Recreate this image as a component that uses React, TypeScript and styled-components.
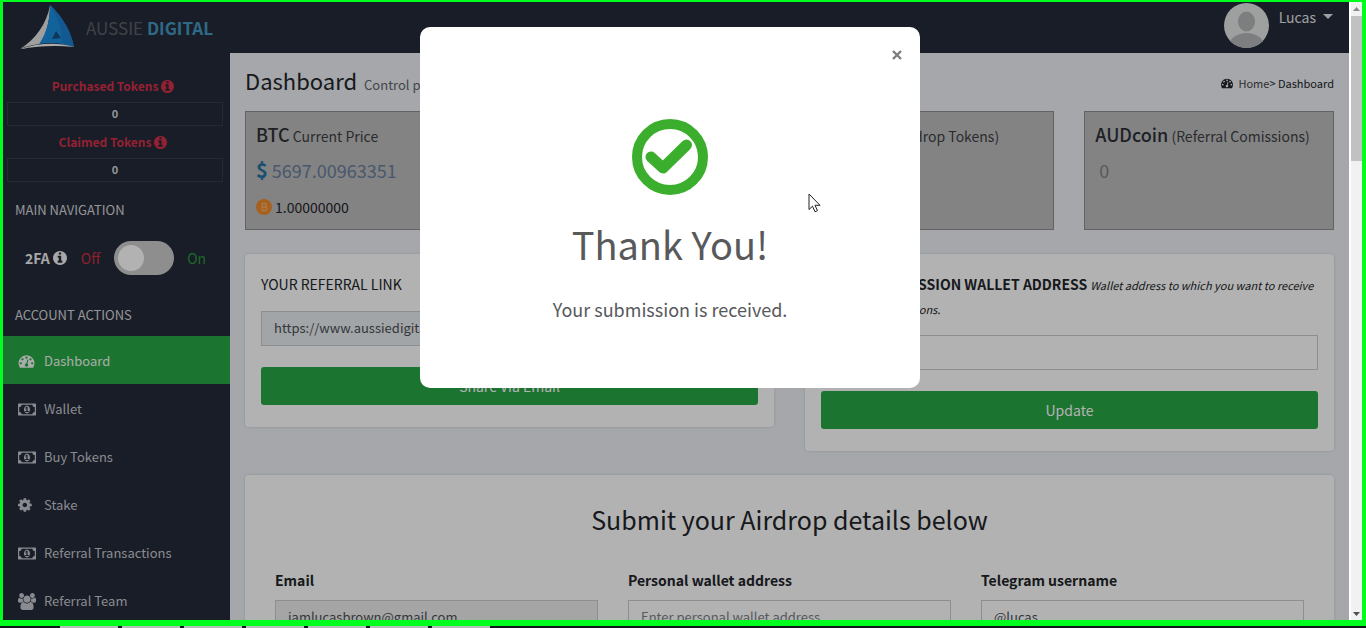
import React from "react";
import styled, { createGlobalStyle } from "styled-components";

const GlobalStyle = createGlobalStyle`
  *, *::before, *::after { box-sizing: border-box; }
  body {
    margin: 0;
    font-family: "Noto Sans CJK SC", "Noto Sans", sans-serif;
    font-size: 14px;
    line-height: 24px;
    color: #212529;
  }
  input, button { font: inherit; color: inherit; }
  h1, h2, h3, p { margin: 0; font-weight: 400; }
`;

/* ---------- icons ---------- */

const glyphs = {
  gauge: {
    box: "0 0 1792 1792",
    d: "M384 1152q0-53-37.5-90.5t-90.5-37.5-90.5 37.5-37.5 90.5 37.5 90.5 90.5 37.5 90.5-37.5 37.5-90.5zm192-448q0-53-37.5-90.5t-90.5-37.5-90.5 37.5-37.5 90.5 37.5 90.5 90.5 37.5 90.5-37.5 37.5-90.5zm428 481l101-382q6-26-7.5-48.5t-38.5-29.5-48 6.5-30 39.5l-101 382q-60 5-107 43.5t-63 98.5q-20 77 20 146t117 89 146-20 89-117q16-60-6-117t-72-91zm660-33q0-53-37.5-90.5t-90.5-37.5-90.5 37.5-37.5 90.5 37.5 90.5 90.5 37.5 90.5-37.5 37.5-90.5zm-640-640q0-53-37.5-90.5t-90.5-37.5-90.5 37.5-37.5 90.5 37.5 90.5 90.5 37.5 90.5-37.5 37.5-90.5zm448 192q0-53-37.5-90.5t-90.5-37.5-90.5 37.5-37.5 90.5 37.5 90.5 90.5 37.5 90.5-37.5 37.5-90.5zm320 448q0 261-141 483-19 29-54 29h-1402q-35 0-54-29-141-221-141-483 0-182 71-348t191-286 286-191 348-71 348 71 286 191 191 286 71 348z",
  },
  money: {
    box: "0 0 1920 1792",
    d: "M768 1152h384v-96h-128v-448h-114l-148 137 77 80q42-37 55-57h2v288h-128v96zm512-256q0 70-21 142t-59.5 134-101.5 101-138 39-138-39-101.5-101-59.5-134-21-142 21-142 59.5-134 101.5-101 138-39 138 39 101.5 101 59.5 134 21 142zm512 256v-512q-106 0-181-75t-75-181h-1152q0 106-75 181t-181 75v512q106 0 181 75t75 181h1152q0-106 75-181t181-75zm128-832v1152q0 26-19 45t-45 19h-1792q-26 0-45-19t-19-45v-1152q0-26 19-45t45-19h1792q26 0 45 19t19 45z",
  },
  cog: {
    box: "128 0 1792 1792",
    d: "M1152 896q0-106-75-181t-181-75-181 75-75 181 75 181 181 75 181-75 75-181zm512-109v222q0 12-8 23t-20 13l-185 28q-19 54-39 91 35 50 107 138 10 12 10 25t-9 23q-27 37-99 108t-94 71q-12 0-26-9l-138-108q-44 23-91 38-16 136-29 186-7 28-36 28h-222q-14 0-24.5-8.5t-11.5-21.5l-28-184q-49-16-90-37l-141 107q-10 9-25 9-14 0-25-11-126-114-165-168-7-10-7-23 0-12 8-23 15-21 51-66.5t54-70.5q-27-50-41-99l-183-27q-13-2-21-12.5t-8-23.5v-222q0-12 8-23t19-13l186-28q14-46 39-92-40-57-107-138-10-12-10-24 0-10 9-23 26-36 98.5-107.5t94.5-71.5q13 0 26 10l138 107q44-23 91-38 16-136 29-186 7-28 36-28h222q14 0 24.5 8.5t11.5 21.5l28 184q49 16 90 37l142-107q9-9 24-9 13 0 25 10 129 119 165 170 7 8 7 22 0 12-8 23-15 21-51 66.5t-54 70.5q26 50 41 98l183 28q13 2 21 12.5t8 23.5z",
  },
  users: {
    box: "64 0 1920 1792",
    d: "M657 896q-162 5-265 128h-134q-82 0-138-40.5t-56-118.5q0-353 124-353 6 0 43.5 21t97.5 42.5 119 21.5q67 0 133-23-5 37-5 66 0 159 93 286zm1071 637q0 120-73 189.5t-194 69.5h-874q-121 0-194-69.5t-73-189.5q0-53 3.5-103.5t14-109 26.5-108.5 43-97.5 62-81 85.5-53.5 111.5-20q10 0 43 21.5t73 48 107 48 135 21.5 135-21.5 107-48 73-48 43-21.5q61 0 111.5 20t85.5 53.5 62 81 43 97.5 26.5 108.5 14 109 3.5 103.5zm-1024-1277q0 106-75 181t-181 75-181-75-75-181 75-181 181-75 181 75 75 181zm704 384q0 159-112.5 271.5t-271.5 112.5-271.5-112.5-112.5-271.5 112.5-271.5 271.5-112.5 271.5 112.5 112.5 271.5zm576 225q0 78-56 118.5t-138 40.5h-134q-103-123-265-128 93-127 93-286 0-29-5-66 66 23 133 23 59 0 119-21.5t97.5-42.5 43.5-21q124 0 124 353zm-128-609q0 106-75 181t-181 75-181-75-75-181 75-181 181-75 181 75 75 181z",
  },
  info: {
    box: "128 128 1536 1536",
    d: "M1152 1376v-160q0-14-9-23t-23-9h-96v-512q0-14-9-23t-23-9h-320q-14 0-23 9t-9 23v160q0 14 9 23t23 9h96v320h-96q-14 0-23 9t-9 23v160q0 14 9 23t23 9h448q14 0 23-9t9-23zm-128-896v-160q0-14-9-23t-23-9h-192q-14 0-23 9t-9 23v160q0 14 9 23t23 9h192q14 0 23-9t9-23zm640 416q0 209-103 385.5t-279.5 279.5-385.5 103-385.5-103-279.5-279.5-103-385.5 103-385.5 279.5-279.5 385.5-103 385.5 103 279.5 279.5 103 385.5z",
  },
};

type GlyphName = keyof typeof glyphs;

const Icon = ({ name, width, height }: { name: GlyphName; width: number; height: number }) => (
  <svg width={width} height={height} viewBox={glyphs[name].box} fill="currentColor" aria-hidden="true">
    <path d={glyphs[name].d} />
  </svg>
);

/* ---------- window frame ---------- */

const Screen = styled.div`
  display: flex;
  flex-direction: column;
  height: 100vh;
  overflow: hidden;
  background: #14161c;
`;

const Frame = styled.div`
  flex: 1;
  min-height: 0;
  display: grid;
  grid-template-columns: 1fr 13px;
  border: solid #00ff1e;
  border-width: 2px 4px 6px 3px;
`;

const Taskbar = styled.div`
  height: 2px;
  margin-left: 60px;
  width: 430px;
  background: repeating-linear-gradient(90deg, #b9bdb9 0 58px, #14161c 58px 62px);
`;

const View = styled.div`
  position: relative;
  overflow: hidden;
  display: flex;
  flex-direction: column;
  background: #ecf0f5;
`;

const Scrollbar = styled.div`
  display: flex;
  flex-direction: column;
  align-items: center;
  justify-content: space-between;
  background: #f1f1f1;
  border-left: 2px solid #ffffff;
`;

const Thumb = styled.div`
  align-self: stretch;
  height: 145px;
  margin-bottom: auto;
  background: #c1c1c1;
`;

const ScrollArrow = styled.svg`
  display: block;
  width: 11px;
  height: 14px;
`;

/* ---------- header ---------- */

const Header = styled.header`
  flex: none;
  height: 51px;
  display: flex;
  justify-content: space-between;
  padding: 0 16px 0 17px;
  background: #252a38;
`;

const Brand = styled.a`
  display: flex;
  align-items: center;
  gap: 11px;
  text-decoration: none;
  font-size: 17px;
  color: #5c5f68;
`;

const BrandAccent = styled.b`
  color: #4398c0;
`;

const UserMenu = styled.button`
  display: flex;
  align-items: flex-start;
  gap: 10px;
  padding: 1px 0 0;
  border: 0;
  background: none;
  color: #e4e5e8;
`;

const UserName = styled.span`
  display: flex;
  align-items: center;
  gap: 7px;
  padding-top: 2px;
`;

/* ---------- sidebar ---------- */

const Body = styled.div`
  display: grid;
  grid-template-columns: 227px 1fr;
  flex: 1;
  min-height: 0;
`;

const Sidebar = styled.aside`
  overflow: hidden;
  padding-top: 21px;
  background: #252a38;
  color: #d5d7dc;
`;

const TokenField = styled.div`
  padding: 0 7px 4px 4px;
`;

const TokenLabel = styled.label`
  display: flex;
  align-items: center;
  justify-content: center;
  gap: 3px;
  height: 28px;
  padding: 0 4px 4px 0;
  font-size: 12px;
  font-weight: 700;
  color: #d4304a;
`;

const TokenInput = styled.input`
  display: block;
  width: 100%;
  height: 24px;
  padding: 0 0 2px;
  border: 1px solid #363b4b;
  background: transparent;
  text-align: center;
  font-size: 11px;
  font-weight: 700;
`;

const SideHeading = styled.h3`
  padding: 12px 12px 9px;
  font-size: 13px;
  line-height: 24px;
`;

const TwoFactor = styled.label`
  display: flex;
  align-items: center;
  height: 53px;
  margin-bottom: 7px;
  padding-left: 22px;
`;

const TwoFactorName = styled.b`
  display: flex;
  align-items: center;
  gap: 3px;
  margin-right: 14px;
  color: #f0f0f2;
`;

const SwitchState = styled.span<{ $on?: boolean }>`
  color: ${(p) => (p.$on ? "#28963c" : "#cc2f45")};
`;

const Switch = styled.input`
  appearance: none;
  display: flex;
  align-items: center;
  width: 60px;
  height: 34px;
  margin: 0 13px 0 14px;
  padding: 0 4px;
  border-radius: 17px;
  background: #cccccc;
  &::before {
    content: "";
    width: 26px;
    height: 26px;
    border-radius: 50%;
    background: #ffffff;
  }
  &:checked { justify-content: flex-end; background: #28a745; }
`;

const NavItem = styled.a<{ $active?: boolean }>`
  display: grid;
  grid-template-columns: 26px 1fr;
  align-items: center;
  height: 48px;
  padding: 2px 15px 0;
  font-size: 13px;
  text-decoration: none;
  color: ${(p) => (p.$active ? "#f2f7f3" : "#c4c7d0")};
  background: ${(p) => (p.$active ? "#28a745" : "transparent")};
`;

/* ---------- page content ---------- */

const Content = styled.main`
  overflow: hidden;
  padding: 0 15px;
`;

const TitleRow = styled.div`
  display: flex;
  align-items: center;
  justify-content: space-between;
  height: 58px;
`;

const PageTitle = styled.h1`
  font-size: 22px;
`;

const Subtitle = styled.small`
  margin-left: 7px;
  font-size: 13px;
  color: #61656b;
`;

const Breadcrumb = styled.nav`
  display: flex;
  align-items: center;
  gap: 5px;
  padding-top: 2px;
  font-size: 11px;
`;

const CrumbLink = styled.a`
  color: #444444;
  text-decoration: none;
`;

const StatRow = styled.div`
  display: grid;
  grid-template-columns: repeat(4, 1fr);
  gap: 30px;
`;

const StatCard = styled.section`
  height: 119px;
  padding: 10px;
  border: 1px solid #8f8f8f;
  background: #bcbcbc;
`;

const StatTitle = styled.h2`
  margin-bottom: 10px;
  font-size: 14px;
  white-space: nowrap;
  color: #3c3f44;
`;

const StatName = styled.b`
  font-size: 18px;
  font-weight: 500;
  color: #2c2f36;
`;

const StatValue = styled.p<{ $muted?: boolean }>`
  margin-bottom: 13px;
  padding-left: ${(p) => (p.$muted ? "4px" : "0")};
  font-size: 18px;
  color: ${(p) => (p.$muted ? "#7f8084" : "#687e9d")};
`;

const Dollar = styled.b`
  margin-right: 4px;
  font-size: 20px;
  line-height: 20px;
  color: #24719f;
`;

const StatExtra = styled.p`
  display: flex;
  align-items: center;
  gap: 3px;
  font-size: 14px;
`;

const PanelRow = styled.div`
  display: grid;
  grid-template-columns: 1fr 1fr;
  align-items: start;
  gap: 31px;
  margin: 24px 0;
`;

const Panel = styled.section`
  padding: 18px 16px 22px;
  border-radius: 4px;
  background: #ffffff;
  box-shadow: 0 0 3px rgba(0, 0, 0, 0.14);
`;

const PanelLabel = styled.label`
  display: block;
  margin-bottom: 15px;
  font-size: 14px;
`;

const Hint = styled.em`
  font-size: 11px;
  line-height: 20px;
`;

const TextInput = styled.input`
  display: block;
  width: 100%;
  height: 35px;
  padding: 0 12px 2px;
  border: 1px solid #c9cdd2;
  border-radius: 0;
  background: #ffffff;
  font-size: 13px;
  color: #495057;
  &:read-only { background: #e9ecef; }
  &:disabled { background: #ececec; }
  &::placeholder { color: #7b8188; }
`;

const SubmitButton = styled.button`
  display: block;
  width: 100%;
  height: 38px;
  margin-top: 21px;
  padding: 0;
  border: 0;
  border-radius: 3px;
  background: #28a745;
  color: #ffffff;
`;

const AirdropForm = styled.form`
  padding: 27px 30px;
  border-radius: 4px;
  background: #ffffff;
  box-shadow: 0 0 3px rgba(0, 0, 0, 0.14);
`;

const FormTitle = styled.h2`
  margin-bottom: 32px;
  font-size: 25px;
  line-height: 34px;
  text-align: center;
`;

const FieldRow = styled.div`
  display: grid;
  grid-template-columns: repeat(3, 1fr);
  gap: 30px;
`;

const FieldLabel = styled.label`
  display: block;
  margin-bottom: 8px;
  font-size: 14px;
  font-weight: 700;
`;

/* ---------- modal ---------- */

const Backdrop = styled.div`
  position: absolute;
  inset: 0;
  display: flex;
  justify-content: center;
  align-items: flex-start;
  padding: 25px 12px 0 0;
  background: rgba(0, 0, 0, 0.3);
`;

const Dialog = styled.div`
  position: relative;
  display: flex;
  flex-direction: column;
  align-items: center;
  width: 500px;
  padding: 92px 24px 65px;
  border-radius: 10px;
  background: #ffffff;
  color: #58595b;
`;

const CloseButton = styled.button`
  position: absolute;
  top: 18px;
  right: 13px;
  display: flex;
  align-items: center;
  justify-content: center;
  width: 20px;
  height: 20px;
  padding: 0;
  border: 0;
  background: none;
`;

const DialogTitle = styled.h2`
  margin: 22px 0 24px;
  font-size: 38px;
  line-height: 54px;
`;

const DialogText = styled.p`
  font-size: 18px;
  line-height: 28px;
`;

const Pointer = styled.svg`
  position: absolute;
  left: 388px;
  top: 166px;
`;

const navItems: { label: string; icon: GlyphName; width: number; height: number; active?: boolean }[] = [
  { label: "Dashboard", icon: "gauge", width: 17, height: 16, active: true },
  { label: "Wallet", icon: "money", width: 18, height: 17 },
  { label: "Buy Tokens", icon: "money", width: 18, height: 17 },
  { label: "Stake", icon: "cog", width: 16, height: 16 },
  { label: "Referral Transactions", icon: "money", width: 18, height: 17 },
  { label: "Referral Team", icon: "users", width: 18, height: 17 },
];

const tokenFields = [
  { id: "purchased", label: "Purchased Tokens" },
  { id: "claimed", label: "Claimed Tokens" },
];

const Logo = () => (
  <svg width="55" height="46" viewBox="0 0 55 46" aria-hidden="true">
    <path d="M30 0C27 18 16 34 0 44C7 41 13 40 20 39C27 28 30 14 30 0Z" fill="#e4e4e6" />
    <path d="M30 0C42 11 51 26 54 42C42 38 31 37 19 39C27 28 30 14 30 0Z" fill="#1b8fe0" />
    <path d="M30 0C42 11 51 26 54 42C50 40 46 39 42 38C42 26 38 12 30 0Z" fill="#1a80d0" />
    <path d="M36 26L41 33L32 34Z" fill="#15507f" />
    <path d="M0 44C18 38 38 37 54 42C36 40 18 41 0 44Z" fill="#f2f2f4" />
  </svg>
);

export default function App() {
  return (
    <Screen>
      <GlobalStyle />
      <Frame>
        <View>
          <Header>
            <Brand href="#">
              <Logo />
              <span>
                AUSSIE <BrandAccent>DIGITAL</BrandAccent>
              </span>
            </Brand>
            <UserMenu type="button">
              <svg width="45" height="45" viewBox="0 0 45 45" aria-hidden="true">
                <clipPath id="avatar-clip">
                  <circle cx="22.5" cy="22.5" r="22.5" />
                </clipPath>
                <g clipPath="url(#avatar-clip)">
                  <rect width="45" height="45" fill="#e3e5e6" />
                  <ellipse cx="22.5" cy="18.5" rx="8.5" ry="10" fill="#b3b5b6" />
                  <ellipse cx="22.5" cy="42" rx="17" ry="12" fill="#b3b5b6" />
                </g>
              </svg>
              <UserName>
                Lucas
                <svg width="10" height="9" viewBox="0 0 10 9" aria-hidden="true">
                  <path d="M0 1H10L5 6Z" fill="currentColor" />
                </svg>
              </UserName>
            </UserMenu>
          </Header>

          <Body>
            <Sidebar>
              {tokenFields.map((field) => (
                <TokenField key={field.id}>
                  <TokenLabel htmlFor={field.id}>
                    {field.label}
                    <Icon name="info" width={13} height={13} />
                  </TokenLabel>
                  <TokenInput id={field.id} value="0" readOnly />
                </TokenField>
              ))}
              <SideHeading>MAIN NAVIGATION</SideHeading>
              <TwoFactor>
                <TwoFactorName>
                  2FA
                  <Icon name="info" width={14} height={14} />
                </TwoFactorName>
                <SwitchState>Off</SwitchState>
                <Switch type="checkbox" role="switch" />
                <SwitchState $on>On</SwitchState>
              </TwoFactor>
              <SideHeading>ACCOUNT ACTIONS</SideHeading>
              <nav>
                {navItems.map((item) => (
                  <NavItem key={item.label} href="#" $active={item.active}>
                    <Icon name={item.icon} width={item.width} height={item.height} />
                    {item.label}
                  </NavItem>
                ))}
              </nav>
            </Sidebar>

            <Content>
              <TitleRow>
                <PageTitle>
                  Dashboard
                  <Subtitle>Control panel</Subtitle>
                </PageTitle>
                <Breadcrumb>
                  <Icon name="gauge" width={12} height={12} />
                  <span>
                    <CrumbLink href="#">Home</CrumbLink>&gt; Dashboard
                  </span>
                </Breadcrumb>
              </TitleRow>

              <StatRow>
                <StatCard>
                  <StatTitle>
                    <StatName>BTC</StatName> Current Price
                  </StatTitle>
                  <StatValue>
                    <Dollar>$</Dollar>5697.00963351
                  </StatValue>
                  <StatExtra>
                    <svg width="16" height="16" viewBox="0 0 16 16" aria-hidden="true">
                      <circle cx="8" cy="8" r="8" fill="#ee8c2b" />
                      <path
                        d="M6 4.5V11.5M6 4.5H9Q10.5 4.5 10.5 6.2T9 8H6M9 8Q11 8 11 9.8T9 11.5H6"
                        fill="none"
                        stroke="#f5ae68"
                        strokeWidth="1.3"
                      />
                    </svg>
                    1.00000000
                  </StatExtra>
                </StatCard>
                <StatCard />
                <StatCard>
                  <StatTitle>
                    <StatName>AUDcoin</StatName> (Airdrop Tokens)
                  </StatTitle>
                </StatCard>
                <StatCard>
                  <StatTitle>
                    <StatName>AUDcoin</StatName> (Referral Comissions)
                  </StatTitle>
                  <StatValue $muted>0</StatValue>
                </StatCard>
              </StatRow>

              <PanelRow>
                <Panel>
                  <PanelLabel htmlFor="referral-link">YOUR REFERRAL LINK</PanelLabel>
                  <TextInput id="referral-link" defaultValue="https://www.aussiedigital" readOnly />
                  <SubmitButton type="button">Share Via Email</SubmitButton>
                </Panel>
                <Panel>
                  <PanelLabel htmlFor="commission-wallet">
                    <b>ENTER COMMISSION WALLET ADDRESS</b>{" "}
                    <Hint>Wallet address to which you want to receive the referral comissions.</Hint>
                  </PanelLabel>
                  <TextInput id="commission-wallet" />
                  <SubmitButton type="button">Update</SubmitButton>
                </Panel>
              </PanelRow>

              <AirdropForm>
                <FormTitle>Submit your Airdrop details below</FormTitle>
                <FieldRow>
                  <div>
                    <FieldLabel htmlFor="email">Email</FieldLabel>
                    <TextInput id="email" defaultValue="iamlucasbrown@gmail.com" disabled />
                  </div>
                  <div>
                    <FieldLabel htmlFor="wallet">Personal wallet address</FieldLabel>
                    <TextInput id="wallet" placeholder="Enter personal wallet address" />
                  </div>
                  <div>
                    <FieldLabel htmlFor="telegram">Telegram username</FieldLabel>
                    <TextInput id="telegram" defaultValue="@lucas" />
                  </div>
                </FieldRow>
              </AirdropForm>
            </Content>
          </Body>

          <Backdrop>
            <Dialog role="dialog" aria-modal="true" aria-labelledby="dialog-title">
              <CloseButton type="button" aria-label="Close">
                <svg width="10" height="10" viewBox="0 0 10 10" aria-hidden="true">
                  <path d="M1 1L9 9M9 1L1 9" stroke="#7d7d7d" strokeWidth="2.4" />
                </svg>
              </CloseButton>
              <svg width="76" height="76" viewBox="0 0 76 76" fill="none" stroke="#3cae2e" aria-hidden="true">
                <circle cx="38" cy="38" r="33" strokeWidth="10" />
                <path d="M19 38L31 49L54.5 26" strokeWidth="11" strokeLinecap="round" strokeLinejoin="round" />
              </svg>
              <DialogTitle id="dialog-title">Thank You!</DialogTitle>
              <DialogText>Your submission is received.</DialogText>
              <Pointer width="13" height="20" viewBox="0 0 13 20" aria-hidden="true">
                <path
                  d="M1 1V16.5L4.5 13.2L7 18.8L9.5 17.7L7 12.3H12Z"
                  fill="#ffffff"
                  stroke="#222222"
                  strokeWidth="1"
                />
              </Pointer>
            </Dialog>
          </Backdrop>
        </View>

        <Scrollbar>
          <ScrollArrow viewBox="0 0 11 14" aria-hidden="true">
            <path d="M2 9H9L5.5 5Z" fill="#8a8a8a" />
          </ScrollArrow>
          <Thumb />
          <ScrollArrow viewBox="0 0 11 14" aria-hidden="true">
            <path d="M2 6H9L5.5 10Z" fill="#505050" />
          </ScrollArrow>
        </Scrollbar>
      </Frame>
      <Taskbar />
    </Screen>
  );
}
